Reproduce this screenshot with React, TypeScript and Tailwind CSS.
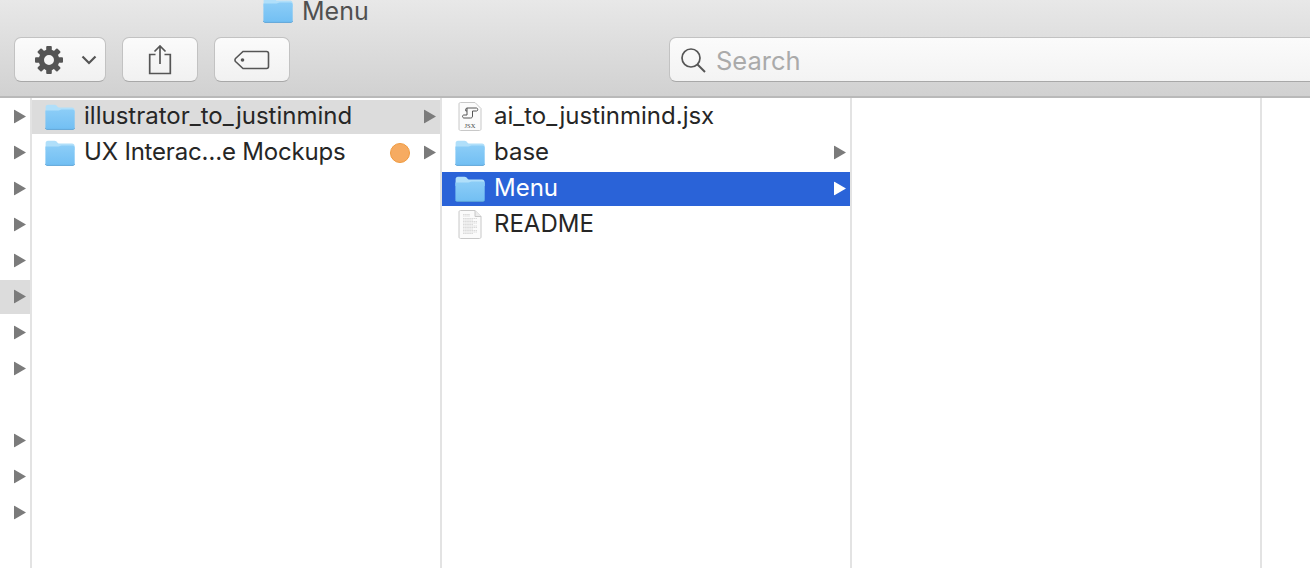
import React from "react";

function Folder({ className = "" }: { className?: string }) {
  return (
    <svg width="30" height="26" viewBox="0 0 30 26" className={"shrink-0 " + className}>
      <defs>
        <linearGradient id="fg" x1="0" y1="0" x2="0" y2="1">
          <stop offset="0" stopColor="#8ccdf7" />
          <stop offset="1" stopColor="#72bff3" />
        </linearGradient>
      </defs>
      <path d="M0.6 3.5C0.6 1.8 1.4 0.8 3 0.8H9.5C11 0.8 11.6 1.6 12.4 2.6C12.9 3.2 13.4 3.6 14.5 3.6H27C28.6 3.6 29.6 4.6 29.6 6V10H0.6Z" fill="#b0dffa" />
      <path d="M0.4 6.4H13.5C14.8 6.4 15.4 5.4 16.5 5.4H27.5C28.8 5.4 29.7 6.2 29.7 7.6V23.5C29.7 24.6 29 25.2 28 25.2H2C1 25.2 0.4 24.6 0.4 23.5Z" fill="url(#fg)" />
      <path d="M0.4 23.9C0.4 24.8 1 25.4 2 25.4H28C29 25.4 29.7 24.8 29.7 23.9" fill="none" stroke="#5da5d8" strokeWidth="1" />
    </svg>
  );
}

function Arrow({ color = "#7b7b7b", className = "" }: { color?: string; className?: string }) {
  return (
    <svg width="12" height="14" viewBox="0 0 12 14" className={"shrink-0 -translate-y-[0.5px] " + className}>
      <path d="M0 0L12 7L0 14Z" fill={color} />
    </svg>
  );
}

function DocFrame({ children }: { children: React.ReactNode }) {
  return (
    <svg width="24" height="30" viewBox="0 0 24 30" className="shrink-0 -translate-y-[0.5px]">
      <path d="M1 2.5C1 1.6 1.6 1 2.5 1H17L23 7V27.5C23 28.4 22.4 29 21.5 29H2.5C1.6 29 1 28.4 1 27.5Z" fill="#fbfbfb" stroke="#c8c8c8" strokeWidth="1" />
      {children}
    </svg>
  );
}

function JsxIcon() {
  return (
    <DocFrame>
      <path d="M9 6.5H18.5C20 6.5 20.3 9.5 18.5 9.5H14.5V14.5C14.5 16 13.8 16.5 12.5 16.5H6C4.2 16.5 4 13.5 5.8 13.5H9V6.5ZM9 6.5C7.8 6.5 7.5 8.2 7.8 9.5H9" fill="none" stroke="#555" strokeWidth="1" />
      <text x="12" y="26" textAnchor="middle" fontSize="6.5" fontWeight="400" fill="#444" fontFamily="'Liberation Serif', serif">JSX</text>
    </DocFrame>
  );
}

function ReadmeIcon() {
  const lines = [5, 6.5, 9, 10.5, 12, 13.5, 15, 16.5, 18, 19.5, 21, 22.5, 24];
  return (
    <DocFrame>
      <path d="M17 1V7H23" fill="#ececec" stroke="#c8c8c8" strokeWidth="1" />
      {lines.map((y, i) => (
        <line key={y} x1="5" x2={i < 2 ? 12 : i % 3 === 0 ? 15 : 19} y1={y} y2={y} stroke="#b8b8b8" strokeWidth="0.5" strokeDasharray="1.6 0.5" />
      ))}
    </DocFrame>
  );
}

function Gear() {
  return (
    <svg width="30" height="30" viewBox="0 0 30 30">
      <g fill="#555">
        {[0, 45, 90, 135, 180, 225, 270, 315].map((a) => (
          <rect key={a} x="12.2" y="1" width="5.6" height="7" rx="1" transform={`rotate(${a} 15 15)`} />
        ))}
      </g>
      <circle cx="15" cy="15" r="7.7" fill="none" stroke="#555" strokeWidth="5.4" />
    </svg>
  );
}

function ToolButton({ width, children }: { width: string; children: React.ReactNode }) {
  return (
    <div className={"h-[45px] flex items-center rounded-[7px] bg-gradient-to-b from-[#fbfbfb] to-[#f1f1f1] border border-[#c2c2c2] border-b-[#a8a8a8] " + width}>
      {children}
    </div>
  );
}

function Row({ icon, label, selected, gray, dot, arrow, tight }: { icon: React.ReactNode; label: string; selected?: boolean; gray?: boolean; dot?: boolean; arrow?: boolean; tight?: boolean }) {
  return (
    <div className={"h-[34px] mb-[2px] flex items-center pr-[4px] " + (selected ? "bg-[#2a63d8] text-white" : gray ? "bg-[#dcdcdc] text-[#262626]" : "text-[#262626]")}>
      <div className="w-[52px] flex justify-center shrink-0 pl-[4px]">{icon}</div>
      <span className={"flex-1 text-[24px] leading-none whitespace-nowrap pb-[2px] " + (tight ? "tracking-[-0.2px]" : "tracking-[0px]")}>{label}</span>
      {dot && <span className="w-[20px] h-[20px] rounded-full bg-[#f6ab61] border border-[#ef9a3f] mr-[14px]" />}
      {arrow && <Arrow color={selected ? "#ffffff" : "#7b7b7b"} />}
    </div>
  );
}

export default function App() {
  const left = [1, 1, 1, 1, 1, 2, 1, 1, 0, 1, 1, 1];
  return (
    <div className="w-[1310px] h-[568px] overflow-hidden bg-white flex flex-col font-['Inter','Liberation_Sans',sans-serif]">
      <header className="h-[98px] shrink-0 bg-gradient-to-b from-[#e8e8e8] to-[#d1d1d1] border-b-2 border-[#b9b9b9] flex flex-col">
        <div className="h-[23px] pl-[263px] flex items-start gap-[9px] shrink-0">
          <div className="h-[23px] overflow-hidden flex items-end shrink-0">
            <Folder />
          </div>
          <span className="text-[25px] leading-[22px] text-[#505050]">Menu</span>
        </div>
        <div className="flex items-center pl-[14px] mt-[14px]">
          <div className="flex gap-[16px]">
            <ToolButton width="w-[92px] pl-[19px]">
              <Gear />
              <svg width="16" height="10" viewBox="0 0 16 10" className="ml-[17px]">
                <path d="M1.5 1.5L8 8L14.5 1.5" fill="none" stroke="#555" strokeWidth="2.2" />
              </svg>
            </ToolButton>
            <ToolButton width="w-[76px] justify-center">
              <svg width="24" height="30" viewBox="0 0 24 30">
                <path d="M7.5 9.5H1.7V28.5H22.3V9.5H16.5 M12 19V1 M6.5 6.5L12 1L17.5 6.5" fill="none" stroke="#555" strokeWidth="1.7" />
              </svg>
            </ToolButton>
            <ToolButton width="w-[76px] justify-center">
              <svg width="36" height="22" viewBox="0 0 36 22">
                <path d="M9 2.5H32.5C33.6 2.5 34.5 3.4 34.5 4.5V17.5C34.5 18.6 33.6 19.5 32.5 19.5H9L1.5 12.5C0.8 11.8 0.8 10.2 1.5 9.5Z" fill="none" stroke="#555" strokeWidth="1.6" />
                <circle cx="8.5" cy="11" r="1.8" fill="#555" />
              </svg>
            </ToolButton>
          </div>
          <div className="ml-[379px] w-[660px] h-[45px] shrink-0 rounded-l-[7px] bg-gradient-to-b from-[#fbfbfb] to-[#f3f3f3] border border-[#c2c2c2] border-b-[#a8a8a8] flex items-center pl-[10px]">
            <svg width="26" height="28" viewBox="0 0 26 28">
              <circle cx="11" cy="12" r="9" fill="none" stroke="#555" strokeWidth="1.7" />
              <path d="M17.5 18.5L25 26" stroke="#555" strokeWidth="2" />
            </svg>
            <span className="ml-[10px] pt-[2px] text-[25.5px] leading-none text-[#aaaaaa]">Search</span>
          </div>
        </div>
      </header>
      <main className="flex-1 flex min-h-0">
        <div className="w-[32px] shrink-0 border-r-2 border-[#e3e3e3] pt-[2px]">
          {left.map((v, i) => (
            <div key={i} className={"h-[34px] mb-[2px] flex items-center pl-[14px] " + (v === 2 ? "bg-[#dcdcdc]" : "")}>
              {v > 0 && <Arrow />}
            </div>
          ))}
        </div>
        <div className="w-[410px] shrink-0 border-r-2 border-[#e3e3e3] pt-[2px]">
          <Row icon={<Folder />} label="illustrator_to_justinmind" gray arrow />
          <Row icon={<Folder />} label="UX Interac…e Mockups" dot arrow tight />
        </div>
        <div className="w-[410px] shrink-0 border-r-2 border-[#e3e3e3] pt-[2px]">
          <Row icon={<JsxIcon />} label="ai_to_justinmind.jsx" />
          <Row icon={<Folder />} label="base" arrow />
          <Row icon={<Folder />} label="Menu" selected arrow />
          <Row icon={<ReadmeIcon />} label="README" />
        </div>
        <div className="w-[410px] shrink-0 border-r-2 border-[#e3e3e3]" />
      </main>
    </div>
  );
}
